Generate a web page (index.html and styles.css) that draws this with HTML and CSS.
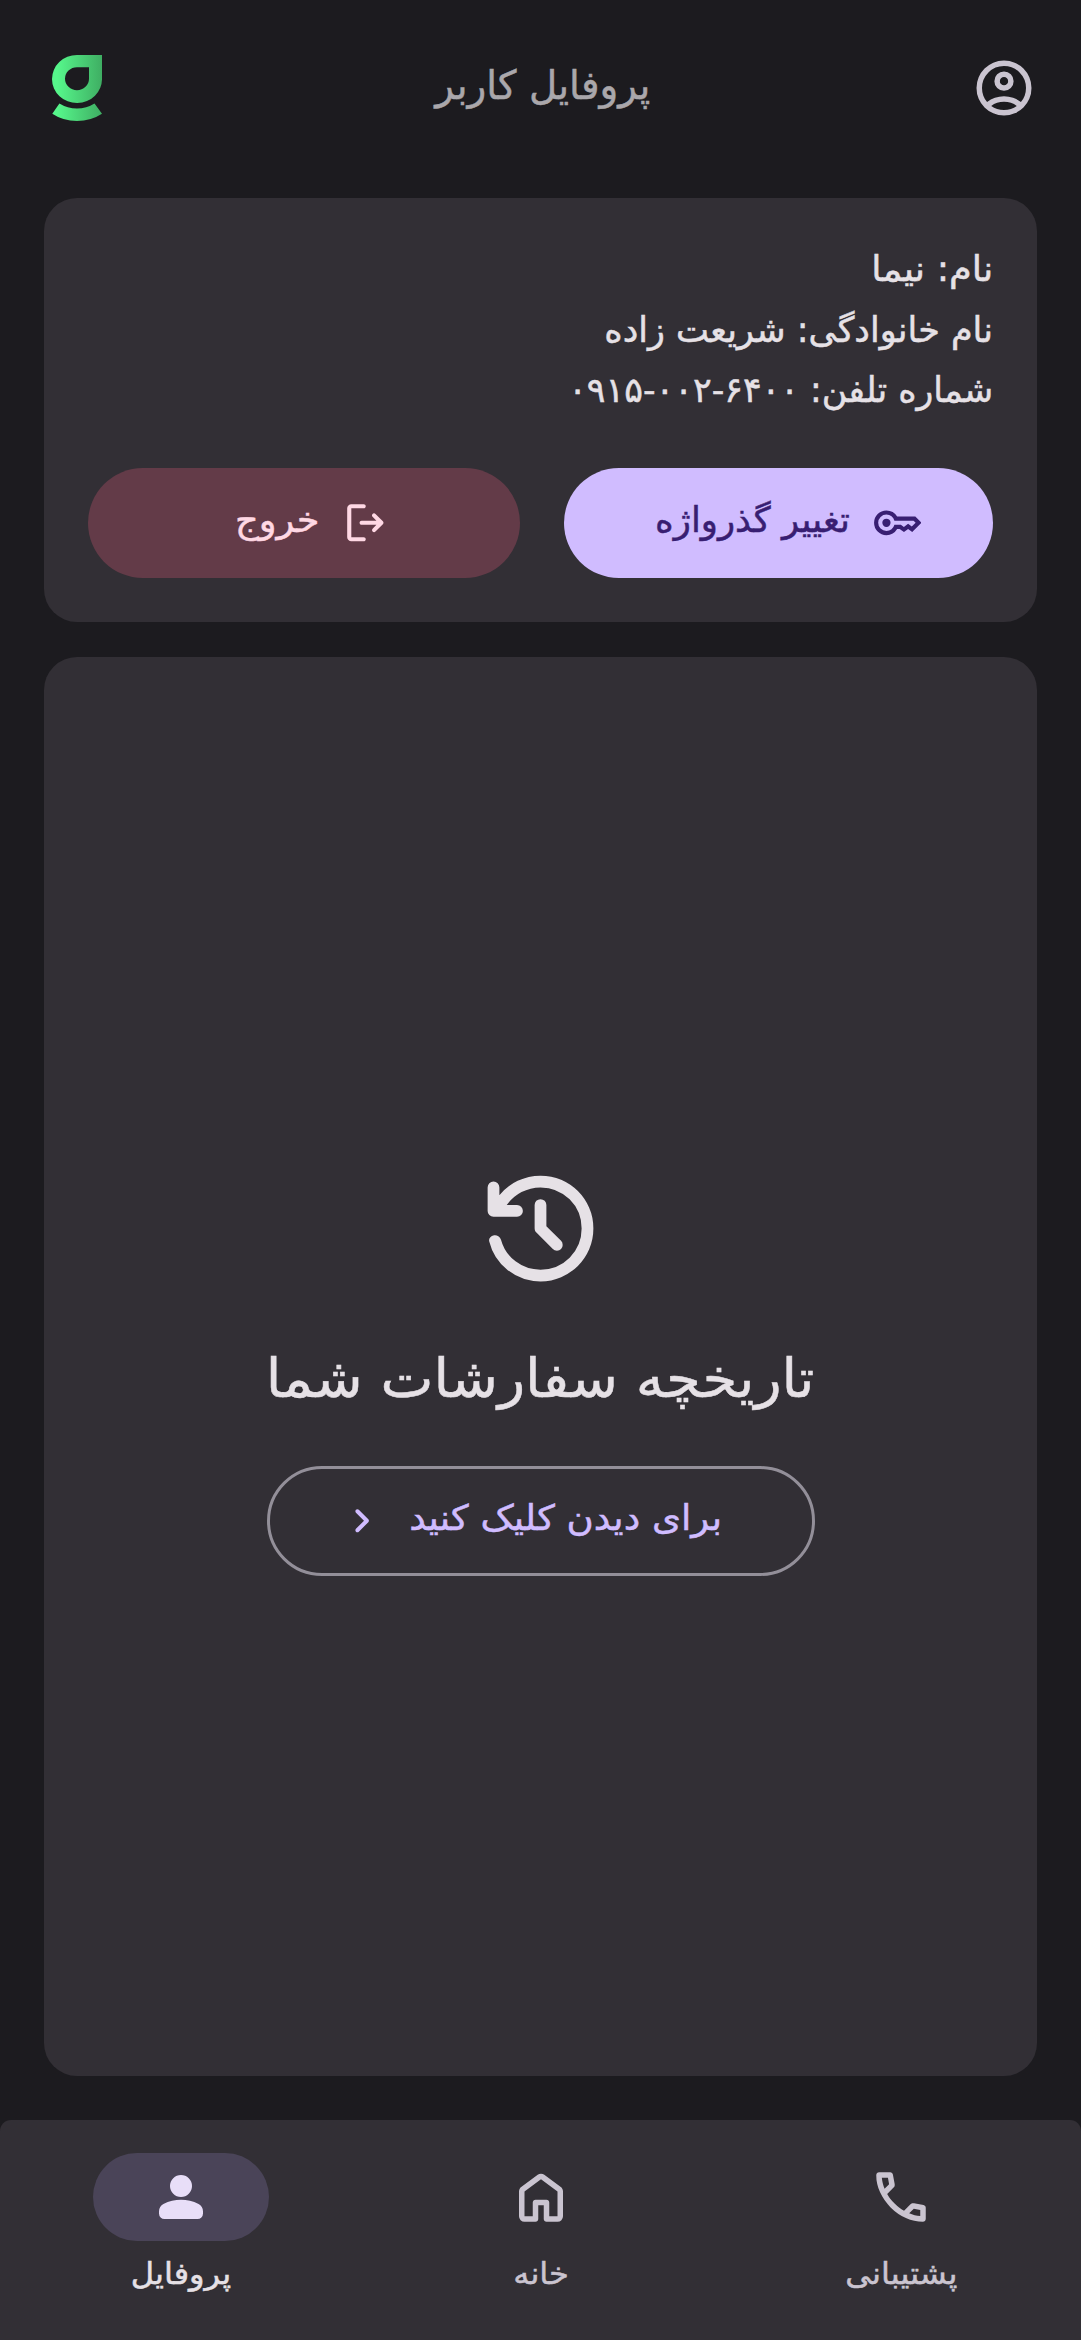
FILE: index.html
```html
<!DOCTYPE html>
<html lang="fa" dir="rtl">
<head>
<meta charset="utf-8">
<title>پروفایل کاربر</title>
<link rel="stylesheet" href="styles.css">
</head>
<body>
<div class="app">
  <header class="topbar">
    <svg class="icon account" viewBox="0 -960 960 960"><path d="M234-276q51-39 114-61.5T480-360q69 0 132 22.5T726-276q35-41 54.5-93T800-480q0-133-93.5-226.5T480-800q-133 0-226.5 93.5T160-480q0 59 19.5 111t54.5 93Zm246-164q-59 0-99.5-40.5T340-580q0-59 40.5-99.5T480-720q59 0 99.5 40.5T620-580q0 59-40.5 99.5T480-440Zm0 360q-83 0-156-31.5T197-197q-54-54-85.5-127T80-480q0-83 31.5-156T197-763q54-54 127-85.5T480-880q83 0 156 31.5T763-763q54 54 85.5 127T880-480q0 83-31.5 156T763-197q-54 54-127 85.5T480-80Zm0-80q53 0 100-15.5t86-44.5q-39-29-86-44.5T480-280q-53 0-100 15.5T294-220q39 29 86 44.5T480-160Zm0-360q26 0 43-17t17-43q0-26-17-43t-43-17q-26 0-43 17t-17 43q0 26 17 43t43 17Z"/></svg>
    <h1 class="title"><span class="text t-title">پروفایل کاربر</span></h1>
    <svg class="logo" viewBox="0 0 50 66">
      <defs><linearGradient id="leaf" x1="0" y1="0" x2="50" y2="0" gradientUnits="userSpaceOnUse"><stop offset="0.1" stop-color="#56f78b"/><stop offset="1" stop-color="#3fae63"/></linearGradient></defs>
      <path fill="url(#leaf)" fill-rule="evenodd" d="M25 0H50V23.5A25 24 0 1 1 25 0ZM25 12.2A12 11.5 0 1 0 37 23.7V12.2Z"/>
      <path fill="url(#leaf)" d="M7.4 48.5Q15.500 53.500 25 53.500T42.500 48.500L50 58.800Q39 66 25 66T.3 58.800Z"/>
    </svg>
  </header>

  <main class="content">
    <section class="card info">
      <p class="row"><span class="text t-name">نام: نیما</span></p>
      <p class="row"><span class="text">نام خانوادگی: شریعت زاده</span></p>
      <p class="row"><span class="text t-phone">شماره تلفن: <bdi dir="ltr">۰۹۱۵-۰۰۲-۶۴۰۰</bdi></span></p>
      <div class="actions">
        <button class="btn primary">
          <svg class="icon small" viewBox="0 -960 960 960"><path d="M280-400q-33 0-56.500-23.500T200-480q0-33 23.500-56.500T280-560q33 0 56.500 23.500T360-480q0 33-23.500 56.500T280-400Zm0 160q-100 0-170-70T40-480q0-100 70-170t170-70q67 0 121.500 33t86.500 87h352l120 120-180 180-80-60-80 60-85-60h-47q-32 54-86.500 87T280-240Zm0-80q56 0 98.500-34t56.500-86h125l58 41 82-61 71 55 75-75-40-40H435q-14-52-56.500-86T280-640q-66 0-113 47t-47 113q0 66 47 113t113 47Z"/></svg>
          <span class="text t-password">تغییر گذرواژه</span>
        </button>
        <button class="btn danger">
          <svg class="icon small" viewBox="0 -960 960 960"><path d="M200-120q-33 0-56.500-23.500T120-200v-560q0-33 23.500-56.500T200-840h240q17 0 28.500 11.500T480-800q0 17-11.500 28.500T440-760H200v560h240q17 0 28.500 11.500T480-160q0 17-11.500 28.500T440-120H200Zm487-320H400q-17 0-28.500-11.500T360-480q0-17 11.500-28.500T400-520h287l-75-75q-11-11-11-27t11-28q11-12 28-12.500t29 11.500l143 143q12 12 12 28t-12 28L669-309q-12 12-28.500 11.500T612-310q-11-12-10.500-28.500T613-366l74-74Z"/></svg>
          <span class="text t-exit">خروج</span>
        </button>
      </div>
    </section>

    <section class="card orders">
      <svg class="icon history" viewBox="0 -960 960 960"><path d="M480-120q-126 0-223-76.500T131-392q-4-15 6-27.500t27-14.500q16-2 29 6t18 24q24 90 99 147t170 57q117 0 198.500-81.500T760-480q0-117-81.500-198.500T480-760q-69 0-129 32t-101 88h70q17 0 28.500 11.500T360-600q0 17-11.500 28.500T320-560H160q-17 0-28.500-11.500T120-600v-160q0-17 11.500-28.500T160-800q17 0 28.500 11.500T200-760v54q51-64 124.500-99T480-840q75 0 140.500 28.500t114 77q48.500 48.500 77 114T840-480q0 75-28.500 140.500t-77 114q-48.500 48.500-114 77T480-120Zm40-376 100 100q11 11 11 28t-11 28q-11 11-28 11t-28-11L452-452q-6-6-9-13.500t-3-15.500v-159q0-17 11.500-28.500T480-680q17 0 28.500 11.500T520-640v144Z"/></svg>
      <h2 class="heading"><span class="text t-heading">تاریخچه سفارشات شما</span></h2>
      <button class="btn outlined">
        <span class="text t-view">برای دیدن کلیک کنید</span>
        <svg class="icon small" viewBox="0 -960 960 960"><path d="M504-480 348-636q-11-11-11-28t11-28q11-11 28-11t28 11l184 184q6 6 8.500 13t2.500 15q0 8-2.500 15t-8.500 13L404-268q-11 11-28 11t-28-11q-11-11-11-28t11-28l156-156Z"/></svg>
      </button>
    </section>
  </main>

  <nav class="navbar">
    <a class="tab">
      <span class="pill"><svg class="icon" viewBox="0 -960 960 960"><path d="M798-120q-125 0-247-54.500T329-329Q229-429 174.500-551T120-798q0-18 12-30t30-12h162q14 0 25 9.500t13 22.500l26 140q2 16-1 27t-11 19l-97 98q20 37 47.500 71.500T387-386q31 31 65 57.500t72 48.500l94-94q9-9 23.500-13.500T670-390l138 28q14 4 23 14.500t9 23.500v162q0 18-12 30t-30 12ZM241-600l66-66-17-94h-89q5 41 14 81t26 79Zm358 358q39 17 79.500 27t81.500 13v-88l-94-19-67 67Z"/></svg></span>
      <span class="label text">پشتیبانی</span>
    </a>
    <a class="tab">
      <span class="pill"><svg class="icon" viewBox="0 -960 960 960"><path d="M240-200h120v-200q0-17 11.500-28.500T400-440h160q17 0 28.500 11.500T600-400v200h120v-360L480-740 240-560v360Zm-80 0v-360q0-19 8.500-36t23.500-28l240-180q21-16 48-16t48 16l240 180q15 11 23.500 28t8.500 36v360q0 33-23.500 56.500T720-120H560q-17 0-28.500-11.500T520-160v-200h-80v200q0 17-11.500 28.500T400-120H240q-33 0-56.500-23.500T160-200Z"/></svg></span>
      <span class="label text">خانه</span>
    </a>
    <a class="tab active">
      <span class="pill"><svg class="icon" viewBox="0 -960 960 960"><path d="M480-480q-66 0-113-47t-47-113q0-66 47-113t113-47q66 0 113 47t47 113q0 66-47 113t-113 47ZM160-240v-32q0-34 17.500-62.500T224-378q62-31 126-46.500T480-440q66 0 130 15.500T736-378q29 15 46.500 43.500T800-272v32q0 33-23.500 56.500T720-160H240q-33 0-56.500-23.500T160-240Z"/></svg></span>
      <span class="label text">پروفایل</span>
    </a>
  </nav>
</div>
</body>
</html>
```
FILE: styles.css
```css
* { box-sizing: border-box; }

body {
  margin: 0;
  background: #1c1b1f;
  color: #e6e1e6;
  font-family: "DejaVu Sans", "Noto Sans", sans-serif;
  font-size: 35px;
}

.app {
  display: flex;
  flex-direction: column;
  width: 1081px;
  height: 2340px;
}

.icon {
  display: block;
  flex: none;
  width: 66px;
  height: 66px;
  fill: currentColor;
}
.icon.small { width: 49.5px; height: 49.5px; }

/* Slightly heavier strokes and per-label widths */
.text {
  display: inline-block;
  -webkit-text-stroke: 0.5px currentColor;
}
.t-title { transform: scaleX(0.97); }
.t-name { transform: scaleX(1.05); transform-origin: right; }
.t-phone { transform: scaleX(0.995); transform-origin: right; }
.t-password { padding-bottom: 5px; transform: scaleX(1.015); transform-origin: right; }
.t-exit { padding-bottom: 5px; transform: scaleX(1.05); transform-origin: right; }
.t-heading { transform: scaleX(1.043); }
.t-view { margin: 0 8px; padding-bottom: 6px; transform: scaleX(1.06); }

.topbar {
  display: flex;
  align-items: center;
  justify-content: space-between;
  height: 176px;
  padding: 0 44px 0 52px;
}
.account { color: #cac4d0; }
.title {
  margin: 0;
  padding: 0 0 6px 12px;
  color: #aaa7ab;
  font-size: 40px;
  font-weight: 400;
  line-height: 60px;
}
.logo { width: 50px; height: 66px; }

.content {
  flex: 1;
  display: flex;
  flex-direction: column;
  gap: 35.5px;
  padding: 22px 44px 44px;
}
.card {
  background: #322f35;
  border-radius: 33px;
}

.info {
  height: 423.5px;
  padding: 41px 44px 44px;
}
.row {
  margin: 0;
  height: 60.5px;
  line-height: 60.5px;
  white-space: nowrap;
}
.actions {
  display: grid;
  grid-template-columns: 429px 432px;
  gap: 44px;
  margin-top: 47px;
}

.btn {
  display: flex;
  align-items: center;
  justify-content: center;
  gap: 22px;
  height: 110px;
  padding: 0 44px 0 66px;
  border: 0;
  border-radius: 55px;
  font: inherit;
  white-space: nowrap;
}
.primary { background: #d0bcff; color: #381e72; }
.danger { background: #633b48; color: #ffd8e4; }

.orders {
  flex: 1;
  display: flex;
  flex-direction: column;
  align-items: center;
  padding-top: 500.5px;
}
.history { width: 141px; height: 141px; }
.heading {
  margin: 38px 0 0;
  font-size: 54px;
  font-weight: 400;
  line-height: 84px;
  white-space: nowrap;
}
.outlined {
  width: 548px;
  margin-top: 45px;
  padding: 0 66px 0 44px;
  border: 3px solid #938f99;
  background: none;
  color: #d0bcff;
}

.navbar {
  display: flex;
  height: 220px;
  padding: 33px 0 0 1px;
  border-radius: 11px 11px 0 0;
  background: #322f35;
}
.tab {
  flex: 1;
  display: flex;
  flex-direction: column;
  align-items: center;
  color: #cac4d0;
}
.pill {
  display: grid;
  place-items: center;
  width: 176px;
  height: 88px;
  border-radius: 44px;
}
.label {
  margin-top: 11px;
  font-size: 30px;
  line-height: 44px;
  transform: scaleX(1.07);
}
.active { color: #e6e1e6; }
.active .pill { background: #4a4458; color: #e8def8; }
```
